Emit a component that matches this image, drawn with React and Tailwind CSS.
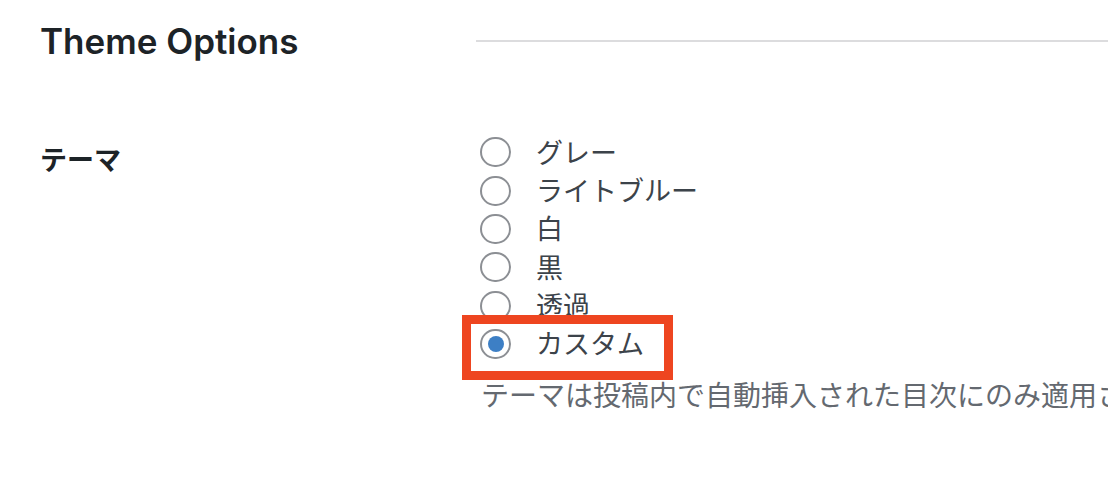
import React from "react";

const themes = [
  { id: "gray", label: "グレー" },
  { id: "lightblue", label: "ライトブルー" },
  { id: "white", label: "白" },
  { id: "black", label: "黒" },
  { id: "transparent", label: "透過" },
  { id: "custom", label: "カスタム" },
];

const Radio = ({ checked }) => (
  <span className="flex h-[30px] w-[31px] shrink-0 items-center justify-center rounded-full border-2 border-[#8c8f94] bg-white">
    {checked && <span className="h-4 w-4 rounded-full bg-[#3d7fc5]" />}
  </span>
);

export default function App() {
  const selected = "custom";

  return (
    <div className="relative h-[478px] w-[1108px] overflow-hidden bg-white font-['Inter','Noto_Sans_CJK_JP',sans-serif]">
      {/* Section header */}
      <div className="flex items-center pl-10 pt-[21px]">
        <h2 className="w-[436px] shrink-0 text-[35px] font-semibold leading-[40px] text-[#1d2327]">
          Theme Options
        </h2>
        <div className="flex-1 border-t-2 border-[#dcdcde]" />
      </div>

      {/* テーマ row */}
      <div className="mt-[72px] flex pl-10">
        <div className="w-[440px] shrink-0 pt-[9px] text-[27px] font-bold leading-[38.4px] text-[#1d2327]">
          テーマ
        </div>

        <div className="min-w-0 flex-1">
          <div className="flex flex-col">
            {themes.map((t) => (
              <label
                key={t.id}
                className="flex h-[38.4px] items-center text-[27px] text-[#3c434a]"
              >
                <Radio checked={t.id === selected} />
                <span className="ml-[25px] pt-[3px] leading-[38.4px]">{t.label}</span>
              </label>
            ))}
          </div>
          <p className="mt-[14px] whitespace-nowrap pl-px text-[28px] leading-[38.4px] text-[#646970]">
            テーマは投稿内で自動挿入された目次にのみ適用されます。
          </p>
        </div>
      </div>

      {/* highlight annotation */}
      <div className="absolute left-[462px] top-[315px] h-[65px] w-[211px] border-[9px] border-[#ee4520]" />
    </div>
  );
}
